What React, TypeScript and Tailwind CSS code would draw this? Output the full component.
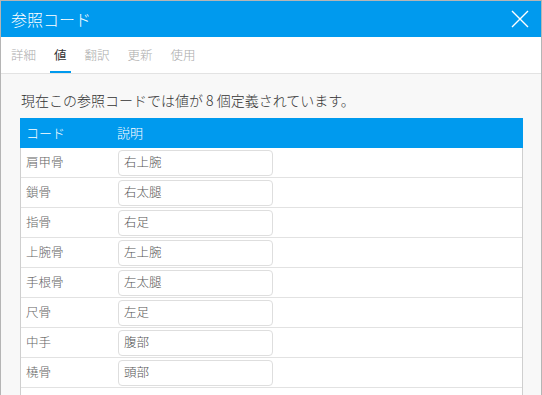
import * as React from "react";

const rows = [
  { code: "肩甲骨", desc: "右上腕" },
  { code: "鎖骨", desc: "右太腿" },
  { code: "指骨", desc: "右足" },
  { code: "上腕骨", desc: "左上腕" },
  { code: "手根骨", desc: "左太腿" },
  { code: "尺骨", desc: "左足" },
  { code: "中手", desc: "腹部" },
  { code: "橈骨", desc: "頭部" },
];

const tabs = ["詳細", "値", "翻訳", "更新", "使用"];

export default function App() {
  return (
    <div
      className="w-[542px] h-[395px] overflow-hidden bg-[#f8f8f8] border-x border-t border-[#b5b5b5] flex flex-col font-light"
      style={{ fontFamily: '"Noto Sans CJK JP", "Noto Sans", sans-serif' }}
    >
      <header className="h-[36px] shrink-0 bg-[#009aee] flex items-center justify-between pl-[10px] pr-[12px]">
        <h1 className="text-white text-[16px] font-light">参照コード</h1>
        <svg width="18" height="18" viewBox="0 0 18 18" className="text-white">
          <path d="M1 1L17 17M17 1L1 17" stroke="currentColor" strokeWidth="1.4" />
        </svg>
      </header>
      <nav className="h-[37px] shrink-0 bg-white border-b border-[#e3e3e3] flex items-stretch pl-[10px] gap-[18px]">
        {tabs.map((t, i) => (
          <div
            key={t}
            className={
              i === 1
                ? "relative flex items-center text-[12.5px] text-[#333] font-normal px-[4px] -mx-[4px]"
                : "relative flex items-center text-[12.5px] text-[#ababab]"
            }
          >
            {t}
            {i === 1 && (
              <span className="absolute left-0 right-0 bottom-0 h-[2px] bg-[#009aee]" />
            )}
          </div>
        ))}
      </nav>
      <main className="flex-1 pt-[16px] pl-[19px] pr-[18px]">
        <p className="text-[14px] text-[#333] leading-[20px] mb-[8px] pl-px">
          現在この参照コードでは値が 8 個定義されています。
        </p>
        <div className="bg-white border-x border-[#cfcfcf]">
          <div className="h-[30px] bg-[#009aee] flex items-center text-white text-[13px] -mx-px">
            <span className="w-[97px] pl-[6px]">コード</span>
            <span>説明</span>
          </div>
          {rows.map((r) => (
            <div
              key={r.code}
              className="h-[30px] flex items-center border-b border-[#e2e2e2] text-[12.5px]"
            >
              <span className="w-[97px] pl-[5px] text-[#666]">{r.code}</span>
              <div className="w-[155px] h-[26px] border border-[#dedede] rounded-[4px] flex items-center pl-[5px] text-[#555] text-[12.5px]">
                {r.desc}
              </div>
            </div>
          ))}
          <div className="h-[30px]" />
        </div>
      </main>
    </div>
  );
}
